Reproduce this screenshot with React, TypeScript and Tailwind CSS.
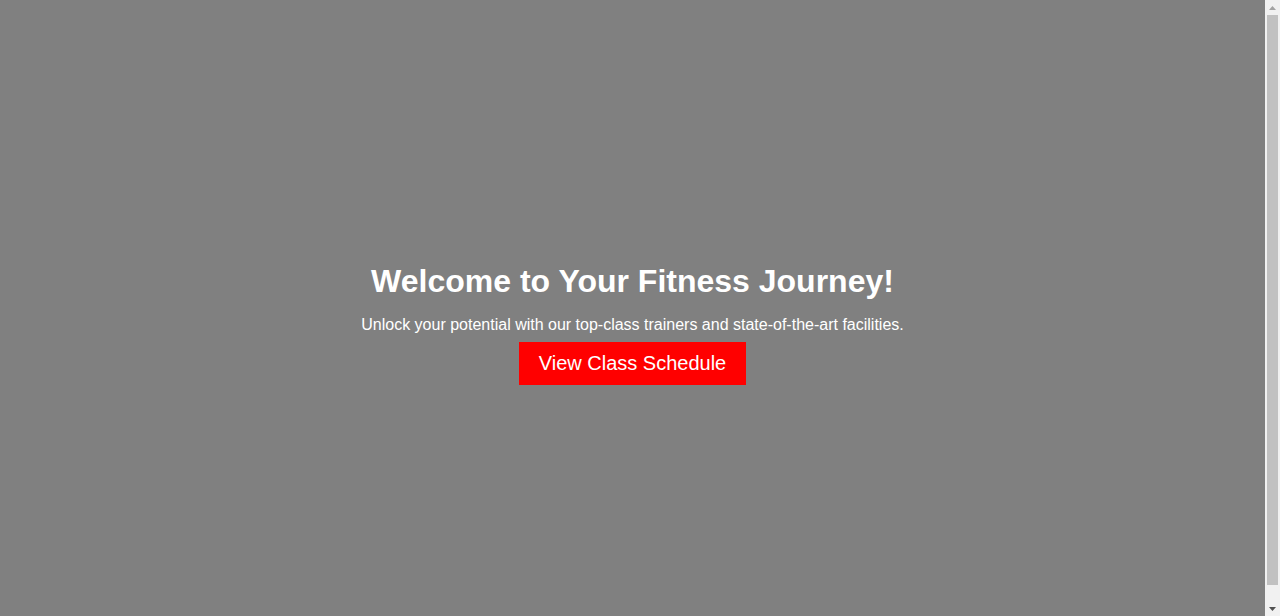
export default function App() {
  return (
    <div
      className="flex h-screen w-full bg-[#808080] text-white"
      style={{ fontFamily: '"Liberation Sans", Arial, sans-serif' }}
    >
      <section className="flex flex-1 items-center justify-center pt-8">
        <div className="flex flex-col items-center text-center">
          <h1 className="text-[32px] leading-[37px] font-bold">Welcome to Your Fitness Journey!</h1>
          <p className="mt-[16.5px] text-base leading-[18px]">
            Unlock your potential with our top-class trainers and state-of-the-art facilities.
          </p>
          <button
            type="button"
            className="mt-2 bg-[#ff0000] px-5 py-2.5 text-[20px] leading-[23px] text-white"
          >
            View Class Schedule
          </button>
        </div>
      </section>

      {/* page scrollbar */}
      <aside className="flex w-[15px] flex-col bg-[#f1f1f1]">
        <div className="flex h-[15px] items-center justify-center">
          <svg width="7" height="4" viewBox="0 0 7 4">
            <path d="M3.5 0 L7 4 L0 4 Z" fill="#a3a3a3" />
          </svg>
        </div>
        <div className="flex-1 px-[2px]">
          <div className="h-[570px] bg-[#c1c1c1]" />
        </div>
        <div className="flex h-[15px] items-center justify-center">
          <svg width="7" height="4" viewBox="0 0 7 4">
            <path d="M0 0 L7 0 L3.5 4 Z" fill="#505050" />
          </svg>
        </div>
      </aside>
    </div>
  );
}
